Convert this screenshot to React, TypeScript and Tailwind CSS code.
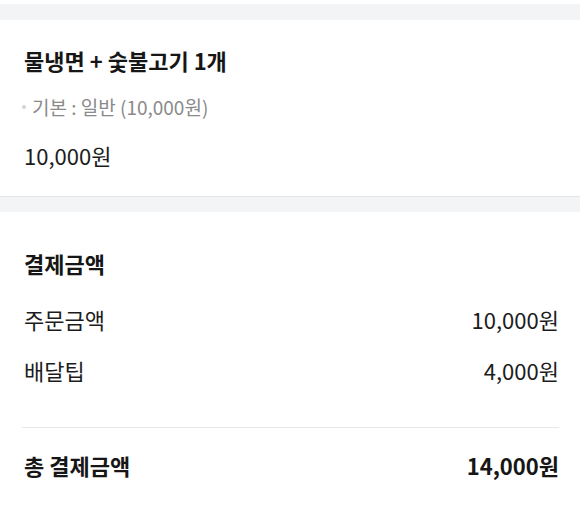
const font = { fontFamily: '"Noto Sans CJK KR", "Noto Sans", sans-serif' };

function Row({ label, value, bold }: { label: string; value: string; bold?: boolean }) {
  return (
    <div className={`flex items-center justify-between h-[30px] text-[22px] leading-[30px] ${bold ? 'font-bold text-[#161616]' : 'text-[#1c1c1c]'}`}>
      <span>{label}</span>
      <span>{value}</span>
    </div>
  );
}

export default function App() {
  return (
    <div className="w-[580px] h-[508px] bg-white overflow-hidden" style={font}>
      <div className="h-[4px] bg-white" />
      <div className="h-[16px] bg-[#f3f4f6]" />

      <section className="bg-white pl-6 pr-[21px] pt-[24px] pb-[26px] border-b border-[#e4e6ea]">
        <h2 className="text-[22px] leading-[32px] font-bold text-[#161616]">물냉면 + 숯불고기 1개</h2>
        <div className="mt-[18px] flex items-center gap-[6px] text-[19px] leading-[26px] text-[#8a8a8a] -ml-[2px]">
          <span className="w-[4px] h-[4px] rounded-full bg-[#d4d4d4]" />
          <span>기본 : 일반 (10,000원)</span>
        </div>
        <p className="mt-[20px] text-[22px] leading-[30px] text-[#1c1c1c]">10,000원</p>
      </section>

      <div className="h-[15px] bg-[#f3f4f6]" />

      <section className="bg-white pl-6 pr-[21px] pt-[36px]">
        <h3 className="text-[22px] leading-[30px] font-bold text-[#161616]">결제금액</h3>
        <div className="mt-[26px]">
          <Row label="주문금액" value="10,000원" />
        </div>
        <div className="mt-[21px]">
          <Row label="배달팁" value="4,000원" />
        </div>
        <div className="mt-[42px] -ml-[2px] border-t border-[#e8e8e8]" />
        <div className="mt-[22px]">
          <Row label="총 결제금액" value="14,000원" bold />
        </div>
      </section>
    </div>
  );
}
